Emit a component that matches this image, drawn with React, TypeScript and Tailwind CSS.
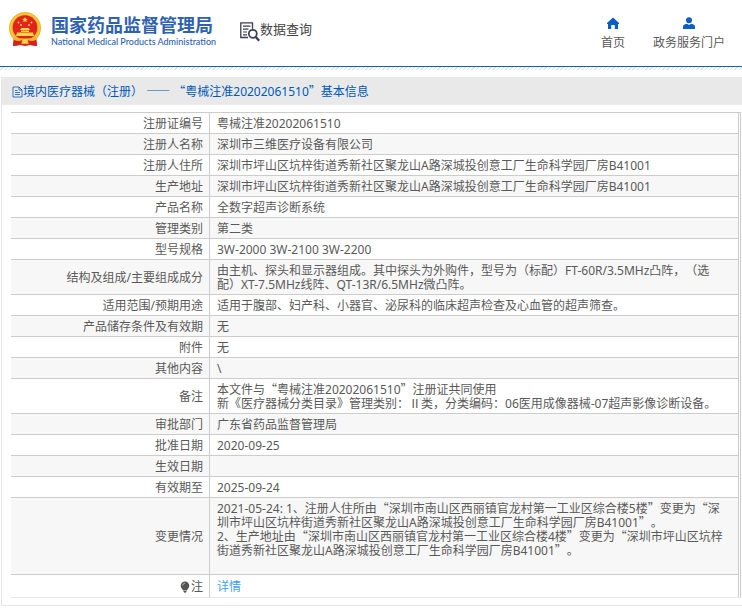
import { Fragment } from 'react';

type Row = {
    label: string;
    lines: string[];
};

const rows: Row[] = [
    { label: '注册证编号', lines: ['粤械注准20202061510'] },
    { label: '注册人名称', lines: ['深圳市三维医疗设备有限公司'] },
    { label: '注册人住所', lines: ['深圳市坪山区坑梓街道秀新社区聚龙山A路深城投创意工厂生命科学园厂房B41001'] },
    { label: '生产地址', lines: ['深圳市坪山区坑梓街道秀新社区聚龙山A路深城投创意工厂生命科学园厂房B41001'] },
    { label: '产品名称', lines: ['全数字超声诊断系统'] },
    { label: '管理类别', lines: ['第二类'] },
    { label: '型号规格', lines: ['3W-2000 3W-2100 3W-2200'] },
    { label: '结构及组成/主要组成成分', lines: ['由主机、探头和显示器组成。其中探头为外购件，型号为（标配）FT-60R/3.5MHz凸阵，（选配）XT-7.5MHz线阵、QT-13R/6.5MHz微凸阵。'] },
    { label: '适用范围/预期用途', lines: ['适用于腹部、妇产科、小器官、泌尿科的临床超声检查及心血管的超声筛查。'] },
    { label: '产品储存条件及有效期', lines: ['无'] },
    { label: '附件', lines: ['无'] },
    { label: '其他内容', lines: ['\\'] },
    { label: '备注', lines: ['本文件与“粤械注准20202061510”注册证共同使用', '新《医疗器械分类目录》管理类别：Ⅱ类，分类编码：06医用成像器械-07超声影像诊断设备。'] },
    { label: '审批部门', lines: ['广东省药品监督管理局'] },
    { label: '批准日期', lines: ['2020-09-25'] },
    { label: '生效日期', lines: [''] },
    { label: '有效期至', lines: ['2025-09-24'] },
    {
        label: '变更情况',
        lines: [
            '2021-05-24: 1、注册人住所由“深圳市南山区西丽镇官龙村第一工业区综合楼5楼”变更为“深圳市坪山区坑梓街道秀新社区聚龙山A路深城投创意工厂生命科学园厂房B41001”。',
            '2、生产地址由“深圳市南山区西丽镇官龙村第一工业区综合楼4楼”变更为“深圳市坪山区坑梓街道秀新社区聚龙山A路深城投创意工厂生命科学园厂房B41001”。',
            '',
        ],
    },
];

// Curly quotes and dashes need the full-width glyphs of the CJK font
function Zh({ text }: { text: string }) {
    return (
        <>
            {text.split(/([“”—Ⅱ]+)/).map((part, i) =>
                i % 2 ? <span key={i} className="leading-none font-['Noto_Sans_CJK_SC',sans-serif]">{part}</span> : <Fragment key={i}>{part}</Fragment>
            )}
        </>
    );
}

function Emblem() {
    return (
        <svg viewBox="0 0 32 34" className="h-[34px] w-8 shrink-0" aria-hidden="true">
            <path d="M5 22L4 34l7-1 5 1 5-1 7 1-1-12z" fill="#d8201c" />
            <circle cx="16" cy="16" r="16" fill="#f0b429" />
            <circle cx="16" cy="16" r="14.200" fill="none" stroke="#f7cb48" strokeWidth="1.200" />
            <circle cx="16" cy="15.500" r="12.300" fill="#e0231c" />
            <path d="M16 5l.8 1.800 2 .2-1.500 1.300.5 2L16 9.300l-1.800 1 .5-2L13.200 7l2-.2z" fill="#fbd84b" />
            <g fill="#fbd84b">
                <circle cx="9.500" cy="10.500" r=".9" />
                <circle cx="12" cy="13" r=".9" />
                <circle cx="20" cy="13" r=".9" />
                <circle cx="22.500" cy="10.500" r=".9" />
                <path d="M11 18l1.500-2h7l1.500 2zM12 18.500h8V20h-8zM8 20.500h16L25 24H7z" />
            </g>
            <path d="M5 25q11 3 22 0l-1 5q-3 1-5 0-2 2-5 2t-5-2q-2 1-5 0z" fill="#f2b62c" />
            <path d="M5 28q5 2 8 0 0 3-2 5l-7 1zM27 28q-5 2-8 0 0 3 2 5l7 1z" fill="#d8201c" />
            <circle cx="16" cy="29" r="2.200" fill="#f9d65a" />
        </svg>
    );
}

function QueryIcon() {
    return (
        <svg viewBox="0 0 20 20" className="size-5 shrink-0" fill="none" stroke="#3b3b52" aria-hidden="true">
            <path d="M8 15.500H.8V.8h11.700v6" strokeWidth="1.300" />
            <path d="M3 4.200h7.500M3 7.200h5.500M3 10h4M3 12.800h4" strokeWidth="1.200" />
            <circle cx="12.800" cy="11.800" r="4" strokeWidth="1.700" />
            <path d="M15.800 15l3.400 3.800" strokeWidth="2.400" />
        </svg>
    );
}

function App() {
    return (
        <div className="bg-white text-xs leading-[14px] text-[#595959] [text-spacing-trim:space-all] font-['Noto_Sans','Noto_Sans_CJK_SC',sans-serif]" lang="zh-CN">
            {/* ---------- header ---------- */}
            <header>
                <div className="flex h-[66px] items-start justify-between border-b border-[#0a62c4] box-content pl-[9px] pr-[17px]">
                    <div className="flex">
                        <a href="#home" className="flex gap-[10px] pt-3 text-[#2e62b0]">
                            <Emblem />
                            <span className="flex flex-col pt-[3px]">
                                <span className="text-lg leading-[18px] font-bold font-['Noto_Sans_CJK_SC',sans-serif]">国家药品监督管理局</span>
                                <span className="pt-[3px] text-[9px] leading-3 font-medium whitespace-nowrap font-[Lato,sans-serif]">National Medical Products Administration</span>
                            </span>
                        </a>
                        <a href="#query" className="ml-6 flex pt-[22px] text-[13px] leading-[14px] text-[#444]">
                            <QueryIcon />
                            <span>数据查询</span>
                        </a>
                    </div>
                    <nav className="flex gap-7 pt-[17px]">
                        <a href="#index" className="flex flex-col items-center gap-[7px]">
                            <svg viewBox="0 0 12 12" className="size-3" fill="#0a5fc2" aria-hidden="true">
                                <path d="M6 .5L12 6v1h-1v5H7.800V8H4.200v4H1V7H0V6z" />
                            </svg>
                            <span>首页</span>
                        </a>
                        <a href="#portal" className="flex flex-col items-center gap-[7px]">
                            <svg viewBox="0 0 12 12" className="size-3" fill="#0a5fc2" aria-hidden="true">
                                <circle cx="6" cy="3.200" r="3" />
                                <path d="M0 12V9.500Q0 8 2 7.300L4 6.700 6 8l2-1.300 2 .6q2 .7 2 2.200V12z" />
                            </svg>
                            <span>政务服务门户</span>
                        </a>
                    </nav>
                </div>
                <div className="h-[3px] bg-[repeating-linear-gradient(135deg,#fff_0px,#fff_2px,#e4e4e4_2px,#e4e4e4_3px)]"></div>
            </header>

            {/* ---------- detail ---------- */}
            <main className="mt-[7px] mb-2 ml-px border-b border-l border-[#e6e6e8]">
                <h1 className="flex h-7 items-center border-b border-[#ebebf5] bg-[#e9e9e9] pt-[2px] pl-[10px] text-[#0059b8]">
                    <svg viewBox="0 0 11 12" className="h-3 w-[11px]" fill="none" stroke="#0059b8" strokeWidth="0.800" aria-hidden="true">
                        <path d="M1 1h6l3 3v7H1zM7 1v3h3M3 4.500h2.500M3 6.500h5M3 8.500h5" />
                    </svg>
                    <span><Zh text="境内医疗器械（注册） —— “粤械注准20202061510”基本信息" /></span>
                </h1>
                <div className="mt-[7px] mr-px mb-[7px] ml-[9px] border-t border-r border-[#ccc] pr-px">
                    <table className="w-full table-fixed border-separate border-spacing-0">
                        <tbody>
                            {rows.map((row) => (
                                <tr key={row.label} className="even:bg-[#f7f7f7]">
                                    <th scope="row" className="w-[199px] border-r border-b border-[#ccc] pt-1 pr-[6px] pb-[2px] text-right font-normal">{row.label}</th>
                                    <td className="border-r border-b border-[#ccc] pt-1 pr-2 pb-[2px] pl-[7px]">
                                        {row.lines.map((line, i) => (
                                            <p key={i} className="min-h-[14px]"><Zh text={line} /></p>
                                        ))}
                                    </td>
                                </tr>
                            ))}
                            <tr>
                                <th scope="row" className="border-r border-b border-r-[#ccc] border-b-[#e8e8f0] pt-[5px] pr-[6px] pb-[3px] font-normal">
                                    <span className="flex items-center justify-end gap-px">
                                        <svg viewBox="0 0 10 12" className="h-3 w-[10px]" aria-hidden="true">
                                            <path d="M5 .5a4.300 4.300 0 014.300 4.300C9.300 7 7.500 8 6.800 9.500H3.200C2.500 8 .7 7 .7 4.800A4.300 4.300 0 015 .5zM3.500 10h3v.8l-1 .9h-1l-1-.9z" fill="#555" />
                                            <path d="M2.500 4.500Q2.800 2.500 5 2.300" fill="none" stroke="#ddd" strokeWidth="0.700" />
                                        </svg>
                                        注
                                    </span>
                                </th>
                                <td className="border-r border-b border-r-[#ccc] border-b-[#e8e8f0] pt-[5px] pr-2 pb-[3px] pl-[7px]">
                                    <a href="#detail" className="text-[#409eff]">详情</a>
                                </td>
                            </tr>
                        </tbody>
                    </table>
                </div>
            </main>
        </div>
    );
}

export default App;
